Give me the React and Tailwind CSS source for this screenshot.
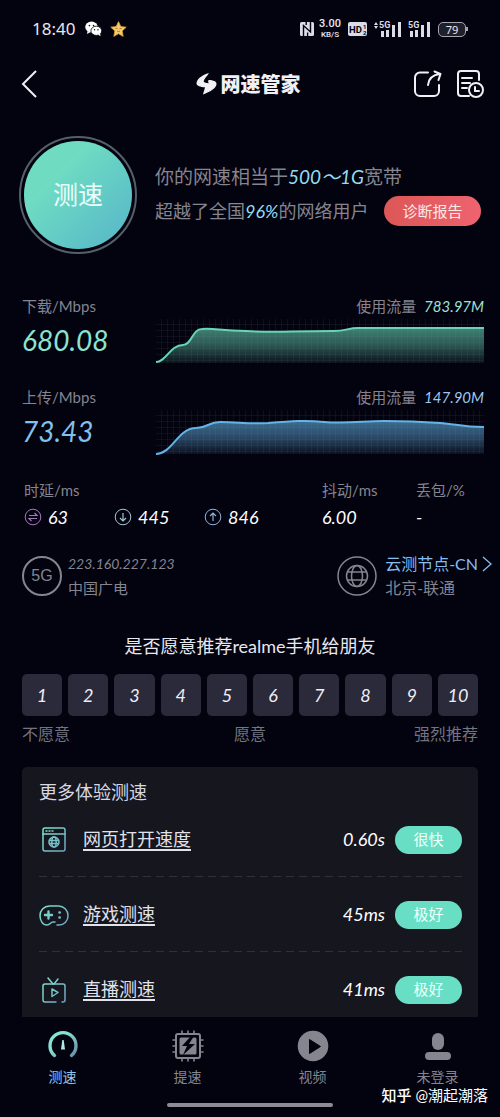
import React from 'react';

const Chart = ({ id, color, line }) => (
  <svg viewBox="0 0 328 46" preserveAspectRatio="none" className="block w-full h-[46px]" aria-hidden="true">
    <defs>
      <linearGradient id={`${id}-fill`} x1="0" y1="0" x2="0" y2="1">
        <stop offset="0" stopColor={color} stopOpacity="0.6" />
        <stop offset="0.5" stopColor={color} stopOpacity="0.4" />
        <stop offset="1" stopColor={color} stopOpacity="0.08" />
      </linearGradient>
      <pattern id={`${id}-grid`} width="6" height="6" patternUnits="userSpaceOnUse">
        <path d="M6 0V6H0" fill="none" stroke="#8a8fa8" strokeOpacity="0.16" strokeWidth="1" />
      </pattern>
    </defs>
    <path d={`${line} V44 H0 Z`} fill={`url(#${id}-fill)`} />
    <rect width="328" height="44" fill={`url(#${id}-grid)`} />
    <path d={line} fill="none" stroke={color} strokeWidth="2" strokeLinejoin="round" />
  </svg>
);

const Metric = ({ id, label, value, traffic, color, line, valueClass, trafficClass }) => (
  <section className="flex h-[91px] items-start">
    <div className="w-[134px] shrink-0">
      <h2 className="text-[15px] leading-5 text-[#85858f]">{label}</h2>
      <p className={`mt-2 text-[28px] leading-8 italic ${valueClass}`}>{value}</p>
    </div>
    <div className="min-w-0 flex-1">
      <p className="text-right text-[15px] leading-5 text-[#85858f]">
        使用流量 <span className={`ml-1 italic ${trafficClass}`}>{traffic}</span>
      </p>
      <div className="mt-[3px]">
        <Chart id={id} color={color} line={line} />
      </div>
    </div>
  </section>
);

const Signal = ({ arrows }) => (
  <svg width="28" height="18" viewBox="0 0 28 18" fill="#dcdce6" aria-hidden="true">
    {arrows && <path d="M3 2 5 5H1ZM3 9 1 6H5Z" />}
    <text x="6" y="8" fontSize="9" fontWeight="700" fontFamily="Roboto, sans-serif">5G</text>
    <path d="M8 11h3v6H8ZM13 10h3v7h-3ZM19 5h3v12h-3ZM25 2h3v15h-3Z" />
  </svg>
);

const StatusBar = () => (
  <div className="flex h-[58px] items-center justify-between pr-8 pl-8 font-['Noto_Sans',sans-serif] text-[#e8e8f0]">
    <div className="flex items-center">
      <time className="text-[17px] leading-6">18:40</time>
      <svg className="ml-2.5" width="17" height="16" viewBox="0 0 17 16" aria-hidden="true">
        <ellipse cx="6.5" cy="6" rx="6.3" ry="5.4" fill="#fff" />
        <path d="M2.5 10 2 13l3.5-2Z" fill="#fff" />
        <ellipse cx="11.3" cy="9.8" rx="5.4" ry="4.6" fill="#fff" stroke="#03020f" strokeWidth="0.8" />
        <path d="m13 13.5 2.5 1.8-.3-3Z" fill="#fff" />
        <g fill="#03020f">
          <circle cx="4.4" cy="4.6" r="0.8" />
          <circle cx="8.5" cy="4.6" r="0.8" />
          <circle cx="9.5" cy="8.7" r="0.7" />
          <circle cx="13" cy="8.7" r="0.7" />
        </g>
      </svg>
      <svg className="ml-2" width="17" height="16" viewBox="0 0 17 16" aria-hidden="true">
        <path d="m8.5.6 2.3 4.9 5.4.7-4 3.7 1 5.5-4.7-2.7-4.7 2.7 1-5.5-4-3.7 5.4-.7Z" fill="#f2cc6b" stroke="#d99b3d" strokeWidth="0.8" strokeLinejoin="round" />
        <path d="M5.5 7.5h2M9.5 7.5h2M7 10q1.5 1 3 0" stroke="#a86e24" strokeWidth="0.9" fill="none" />
      </svg>
    </div>
    <div className="flex items-center">
      <svg width="14" height="14" viewBox="0 0 14 14" aria-hidden="true">
        <rect width="14" height="14" rx="1.5" fill="#dcdce6" />
        <path d="M3.5 14V3.5L10.5 10V0M6.2 0v3M7.6 14v-3.5" fill="none" stroke="#03020f" strokeWidth="1.4" />
      </svg>
      <div className="ml-1 w-6 text-center font-['Roboto',sans-serif] font-medium">
        <div className="text-[11px] leading-[12px]">3.00</div>
        <div className="text-[8px] leading-[10px]">KB/S</div>
      </div>
      <svg className="ml-1.5" width="19" height="14" viewBox="0 0 19 14" aria-hidden="true">
        <rect width="19" height="14" rx="2" fill="#dcdce6" />
        <text x="1" y="11" fontSize="9.500" fontWeight="700" fontFamily="Roboto, sans-serif" fill="#03020f">HD</text>
        <text x="15" y="6.5" fontSize="6" fontWeight="700" fontFamily="Roboto, sans-serif" fill="#03020f">1</text>
        <text x="15" y="12.5" fontSize="6" fontWeight="700" fontFamily="Roboto, sans-serif" fill="#03020f">2</text>
      </svg>
      <span className="ml-1.5 flex gap-px">
        <Signal arrows />
        <Signal />
      </span>
      <span className="ml-2 flex h-[15px] w-7 items-center justify-center rounded-[5px] border border-[#a5a5b2] bg-[#20202c] text-[11px] leading-none">79</span>
      <span className="h-1 w-[2px] bg-[#a5a5b2]" />
    </div>
  </div>
);

const Header = () => (
  <header className="flex h-[52px] items-center justify-between pr-4 pl-[21px] text-[#f0f0f5]">
    <button type="button" aria-label="返回" className="flex w-[63px]">
      <svg width="16" height="28" viewBox="0 0 16 28" fill="none" stroke="currentColor" strokeWidth="2">
        <path d="M15 1 2 14l13 13" />
      </svg>
    </button>
    <h1 className="flex items-center gap-1 text-[20px] leading-7 font-black">
      <svg width="21" height="22" viewBox="0 0 21 22" fill="currentColor" aria-hidden="true">
        <path d="M13 0C6 2 1 6 .5 10c-.3 3 4 4 8.500 4.300-.5 2.500-1.300 4.500-2 7.200C14 19 20.500 15 20.500 11c0-2.700-3-3.800-8-4-.500 1.500-.5 2.500.500 3.300-3.500-.3-5.500-.8-5.300-2C8 6 11 3.500 13 0Z" />
      </svg>
      网速管家
    </h1>
    <div className="flex gap-3.5">
      <button type="button" aria-label="分享">
        <svg width="30" height="28" viewBox="0 0 30 28" fill="none" stroke="currentColor" strokeWidth="2" strokeLinecap="round" strokeLinejoin="round">
          <path d="M16 2.500H8a5 5 0 0 0-5 5V21a5 5 0 0 0 5 5h14a5 5 0 0 0 5-5v-6" />
          <path d="M16 15c.5-6 4-10 12-11M22.500 1.500 28.500 4l-2 6" />
        </svg>
      </button>
      <button type="button" aria-label="测速记录">
        <svg width="28" height="28" viewBox="0 0 28 28" fill="none" stroke="currentColor" strokeWidth="2" strokeLinecap="round">
          <path d="M23 10V4a3 3 0 0 0-3-3H5a3 3 0 0 0-3 3v19a3 3 0 0 0 3 3h8M6 8h10M6 13h8M6 18h5" />
          <circle cx="20" cy="20" r="7" />
          <path d="M19 17v4h4" />
        </svg>
      </button>
    </div>
  </header>
);

const Arrow = ({ kind, className }) => {
  const paths = {
    both: 'M5 7.500h8l-2.500-2.500M13 10.500H5L7.500 13',
    down: 'M9 5v8M6 10l3 3 3-3',
    up: 'M9 13V5M6 8l3-3 3 3',
  };
  return (
    <svg width="18" height="18" viewBox="0 0 18 18" fill="none" stroke="currentColor" className={className} aria-hidden="true">
      <circle cx="9" cy="9" r="7.8" />
      <path d={paths[kind]} strokeWidth="1.2" />
    </svg>
  );
};

const stats = [
  { label: '时延/ms', value: '63', icon: 'both', tint: 'text-[#a578bd]' },
  { label: '', value: '445', icon: 'down', tint: 'text-[#a3c8d2]' },
  { label: '', value: '846', icon: 'up', tint: 'text-[#8fb4dc]' },
  { label: '抖动/ms', value: '6.00' },
  { label: '丢包/%', value: '-' },
];

const WebIcon = () => (
  <>
    <rect x="4" y="3" width="22" height="23" rx="2" />
    <path d="M4 9h22M7 6h1M10 6h1M13 6h1" />
    <circle cx="15" cy="17" r="5" />
    <ellipse cx="15" cy="17" rx="2.200" ry="5" />
    <path d="M10.500 15.500h9M10.500 18.500h9" />
  </>
);

const GameIcon = () => (
  <>
    <path d="M18 25h2a9 9 0 0 0 9-9.500A9.500 9.500 0 0 0 19.500 6h-9A9.500 9.500 0 0 0 1 15.500c0 5 2.500 9.500 7 9.500 3.500 0 3.500-3 6-3h2" />
    <path d="M9.500 11.500v7M6 15h7" strokeWidth="2.400" />
    <path d="M20.500 12.500h.2M20.500 17.500h.2" strokeWidth="2.600" />
  </>
);

const LiveIcon = () => (
  <>
    <path d="M17 27H6a2 2 0 0 1-2-2V11a2 2 0 0 1 2-2h18a2 2 0 0 1 2 2v14a2 2 0 0 1-2 2h-1" />
    <path d="m9 3 5 6M19 4l-4 5" />
    <path d="m13 14 6 3.500-6 4Z" />
  </>
);

const tests = [
  { name: '网页打开速度', value: '0.60s', grade: '很快', Icon: WebIcon },
  { name: '游戏测速', value: '45ms', grade: '极好', Icon: GameIcon },
  { name: '直播测速', value: '41ms', grade: '极好', Icon: LiveIcon },
];

const TestRow = ({ name, value, grade, Icon }) => (
  <li className="flex h-[75px] items-center bg-[repeating-linear-gradient(90deg,#30303a_0_8px,transparent_8px_13px)] bg-[length:100%_1px] bg-bottom bg-no-repeat last:h-[65px] last:bg-none last:pt-2.5">
    <svg width="30" height="30" viewBox="0 0 30 30" fill="none" stroke="url(#icon-tint)" strokeWidth="1.500" strokeLinecap="round" strokeLinejoin="round" aria-hidden="true">
      <Icon />
    </svg>
    <a href="#" className="ml-3.5 border-b-2 border-[#e2e2ea] text-[18px] leading-5 text-[#e2e2ea]">{name}</a>
    <span className="ml-auto text-[18px] italic text-white">{value}</span>
    <span className="ml-2.5 flex h-7 w-[67px] items-center justify-center rounded-full bg-[#68dfc4] text-[15px] text-[#effffa]">{grade}</span>
  </li>
);

const SpeedIcon = () => (
  <svg width="32" height="32" viewBox="0 0 32 32" fill="none" aria-hidden="true">
    <path d="M7.500 25.500a13 13 0 1 1 17 0" stroke="url(#nav-tint)" strokeWidth="3.400" strokeLinecap="round" />
    <path d="m15.300 10-1.300 9.500h4L16.700 10Z" fill="#b6e8e2" />
  </svg>
);

const BoostIcon = () => (
  <svg width="32" height="32" viewBox="0 0 32 32" fill="none" stroke="currentColor" strokeWidth="2" strokeLinecap="round" aria-hidden="true">
    <rect x="4" y="4" width="24" height="24" rx="2" />
    <path d="M10 1v3M16 1v3M22 1v3M10 28v3M16 28v3M22 28v3M1 10h3M1 16h3M1 22h3M28 10h3M28 16h3M28 22h3" strokeWidth="1.600" />
    <rect x="7.500" y="7.500" width="17" height="17" rx="1.500" fill="currentColor" stroke="none" />
    <path d="m19 6-9 10h5l-4 9 12-11h-6l5-8Z" fill="#03020f" stroke="none" />
  </svg>
);

const VideoIcon = () => (
  <svg width="32" height="32" viewBox="0 0 32 32" fill="currentColor" aria-hidden="true">
    <circle cx="16" cy="16" r="15.300" />
    <path d="M12.500 9.500v14L23.500 16.500Z" fill="#03020f" stroke="#03020f" strokeLinejoin="round" />
  </svg>
);

const UserIcon = () => (
  <svg width="32" height="32" viewBox="0 0 32 32" fill="currentColor" aria-hidden="true">
    <rect x="10" y="3" width="12" height="17" rx="6" />
    <rect x="3" y="22" width="26" height="8" rx="4" />
  </svg>
);

const tabs = [
  { name: '测速', Icon: SpeedIcon, active: true },
  { name: '提速', Icon: BoostIcon },
  { name: '视频', Icon: VideoIcon },
  { name: '未登录', Icon: UserIcon },
];

const App = () => {
  return (
    <div className="relative flex min-h-screen flex-col bg-[#03020f] font-['Lato','Noto_Sans_CJK_SC',sans-serif]">
      {/* Shared icon gradients */}
      <svg className="absolute size-0" aria-hidden="true">
        <linearGradient id="icon-tint" gradientUnits="userSpaceOnUse" x1="0" y1="0" x2="30" y2="30">
          <stop offset="0.200" stopColor="#7de0ca" />
          <stop offset="1" stopColor="#7095c4" />
        </linearGradient>
        <linearGradient id="nav-tint" gradientUnits="userSpaceOnUse" x1="4" y1="4" x2="28" y2="28">
          <stop offset="0.300" stopColor="#86e3d2" />
          <stop offset="1" stopColor="#6b87a5" />
        </linearGradient>
      </svg>

      <StatusBar />
      <Header />

      <main className="flex-1">
        {/* Result summary */}
        <section className="flex items-center pt-[26px] pr-[19px] pl-[19px]">
          <button type="button" className="size-[118px] shrink-0 rounded-full border-2 border-[#55606b] p-[3px]">
            <span className="flex size-full items-center justify-center rounded-full bg-linear-to-br from-[#6fdcc2] from-30% to-[#56b4c9] text-[25px] text-[#eafff9]">测速</span>
          </button>
          <div className="ml-[18px] min-w-0 flex-1 text-[#85858f]">
            <p className="text-[19px] leading-8 whitespace-nowrap">
              你的网速相当于<span className="text-[#94dcf2] italic">500～1G</span>宽带
            </p>
            <div className="flex items-center justify-between">
              <p className="text-[18px] leading-9 whitespace-nowrap">
                超越了全国<span className="text-[#94dcf2] italic">96%</span>的网络用户
              </p>
              <button type="button" className="h-[30px] w-[97px] shrink-0 rounded-full bg-linear-to-r from-[#dc5756] to-[#ee6370] text-[15px] text-[#ffe9e4]">诊断报告</button>
            </div>
          </div>
        </section>

        {/* Speed charts */}
        <div className="mt-[42px] pr-4 pl-[22px]">
          <Metric
            id="down"
            label="下载/Mbps"
            value="680.08"
            traffic="783.97M"
            color="#68d6b5"
            valueClass="text-[#8ce3d0]"
            trafficClass="text-[#9fe0d4]"
            line="M0 43C10 43 14 26 27 26C36 26 36 10 46 10C60 9 64 12 90 12C122 14 130 12 178 12C190 12 192 9 202 9H328"
          />
          <Metric
            id="up"
            label="上传/Mbps"
            value="73.43"
            traffic="147.90M"
            color="#64b4e8"
            valueClass="text-[#82c0ee]"
            trafficClass="text-[#9bc8ee]"
            line="M0 44C16 44 22 18 40 18C52 18 52 12 64 12C82 12 92 14 112 13C136 11 150 10 168 12C190 14 208 11 228 11C250 11 270 12 284 13C300 14 306 17 328 17"
          />
        </div>

        {/* Latency, jitter and loss */}
        <dl className="grid grid-cols-[90fr_90fr_118fr_94fr_68fr] pr-4 pl-6">
          {stats.map((stat, idx) => (
            <div key={idx}>
              <dt className="h-6 text-[15px] leading-6 text-[#85858f]">{stat.label}</dt>
              <dd className="mt-0.5 flex h-[26px] items-center gap-1.5 text-[18px] text-white italic">
                {stat.icon && <Arrow kind={stat.icon} className={stat.tint} />}
                {stat.value}
              </dd>
            </div>
          ))}
        </dl>

        {/* Network and test node */}
        <section className="mt-6 flex h-11 items-center justify-between pr-[7px] pl-[22px] text-[16px] leading-6 text-[#85858f]">
          <div className="flex items-center gap-1.5">
            <span className="flex size-10 items-center justify-center rounded-full border-2 border-[#85858f] font-['Liberation_Sans',sans-serif]">5G</span>
            <div>
              <p className="text-[14px] italic">223.160.227.123</p>
              <p className="text-[15px]">中国广电</p>
            </div>
          </div>
          <div className="flex items-center gap-2">
            <svg width="40" height="40" viewBox="0 0 40 40" fill="none" stroke="#85858f" strokeWidth="1.500" aria-hidden="true">
              <circle cx="20" cy="20" r="19" />
              <circle cx="20" cy="20" r="10.500" />
              <ellipse cx="20" cy="20" rx="5.500" ry="10.500" />
              <path d="M10.500 16h19M10.500 24h19" />
            </svg>
            <div>
              <a href="#" className="flex items-center gap-1 text-[#86bdf0]">
                云测节点-CN
                <svg width="11" height="16" viewBox="0 0 11 16" fill="none" stroke="currentColor" strokeWidth="1.300" aria-hidden="true">
                  <path d="m1 1 8 7-8 7" />
                </svg>
              </a>
              <p>北京-联通</p>
            </div>
          </div>
        </section>

        {/* Recommendation survey */}
        <section className="mt-[34px] px-[22px]">
          <h2 className="text-center text-[18px] leading-7 text-[#e8e8f0]">是否愿意推荐realme手机给朋友</h2>
          <div className="mt-3.5 grid grid-cols-10 gap-1.5">
            {[1, 2, 3, 4, 5, 6, 7, 8, 9, 10].map((score) => (
              <button key={score} type="button" className="h-[42px] rounded-[5px] bg-[#2a2a3b] text-[18px] text-[#eeeef5] italic">{score}</button>
            ))}
          </div>
          <div className="mt-1.5 grid grid-cols-3 text-[16px] leading-6 text-[#74747f]">
            <span>不愿意</span>
            <span className="text-center">愿意</span>
            <span className="text-right">强烈推荐</span>
          </div>
        </section>

        {/* More tests */}
        <section className="mx-[22px] mt-[21px] rounded-t-[5px] bg-[#16161f] pt-[11px] pr-4 pl-[17px]">
          <h2 className="text-[18px] leading-7 text-[#d8d8e0]">更多体验测速</h2>
          <ul className="-mt-1">
            {tests.map((test) => (
              <TestRow key={test.name} {...test} />
            ))}
          </ul>
        </section>
      </main>

      <nav className="grid grid-cols-4 pt-3">
        {tabs.map(({ name, Icon, active }) => (
          <a key={name} href="#" className={`flex flex-col items-center gap-[3px] text-[14px] leading-6 ${active ? 'text-[#93c5ec]' : 'text-[#85858f]'}`}>
            <Icon />
            {name}
          </a>
        ))}
      </nav>
      <div className="mx-auto mt-3.5 mb-2.5 h-1 w-1/3 rounded-full bg-[#8c8c96]" />

      {/* Watermark */}
      <p className="absolute right-3 bottom-2.5 text-[15px] leading-6 text-white">
        <span className="font-medium">知乎</span> @潮起潮落
      </p>
    </div>
  );
};

export default App;
